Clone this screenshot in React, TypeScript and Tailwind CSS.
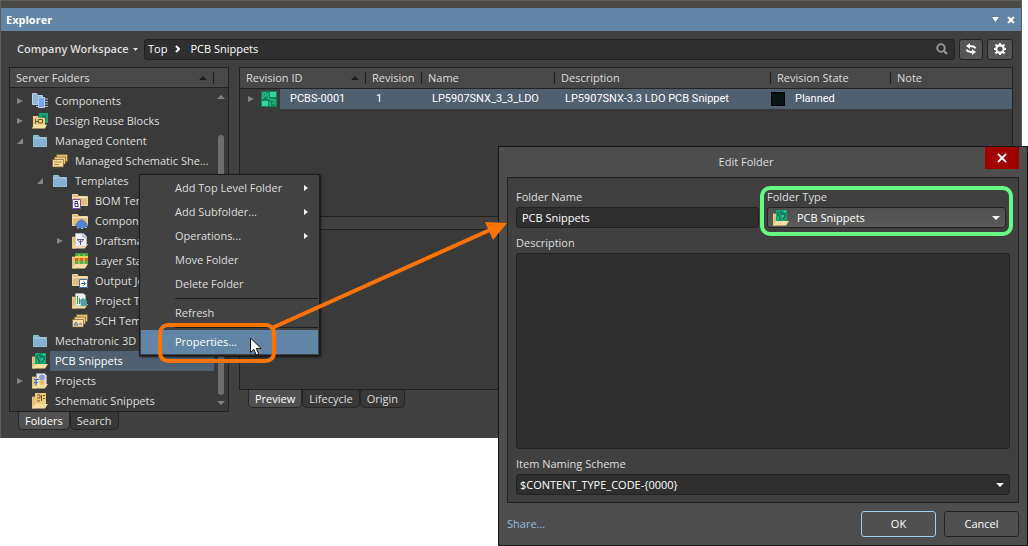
import { useState } from "react";
import type { ReactNode } from "react";

type Kind =
  | "components" | "reuse" | "folder" | "sheets" | "bom" | "component" | "draftsman"
  | "layers" | "output" | "project" | "sch" | "pcb" | "projects" | "snippet";

type Node = { label: string; icon: Kind; level: 0 | 1 | 2; open?: boolean };

const nodes: Node[] = [
  { label: "Components", icon: "components", level: 0, open: false },
  { label: "Design Reuse Blocks", icon: "reuse", level: 0, open: false },
  { label: "Managed Content", icon: "folder", level: 0, open: true },
  { label: "Managed Schematic She...", icon: "sheets", level: 1 },
  { label: "Templates", icon: "folder", level: 1, open: true },
  { label: "BOM Templates", icon: "bom", level: 2 },
  { label: "Component", icon: "component", level: 2 },
  { label: "Draftsman", icon: "draftsman", level: 2, open: false },
  { label: "Layer Stacks", icon: "layers", level: 2 },
  { label: "Output Jobs", icon: "output", level: 2 },
  { label: "Project Types", icon: "project", level: 2 },
  { label: "SCH Templates", icon: "sch", level: 2 },
  { label: "Mechatronic 3D", icon: "folder", level: 0 },
  { label: "PCB Snippets", icon: "pcb", level: 0 },
  { label: "Projects", icon: "projects", level: 0, open: false },
  { label: "Schematic Snippets", icon: "snippet", level: 0 },
];

const indent = ["pl-0", "pl-5", "pl-10"];

const Yellow = () => (
  <>
    <path d="M.5 1.500h5l1 2h9v9H.5z" fill="#e3bd7b" stroke="#f0d7a2" />
    <path d="M1 4.500h14" stroke="#f7e6c0" />
  </>
);

const OpenFolder = () => (
  <path d="M0 4h4v11H0z" fill="#e3bd7b" stroke="#f3dcaa" strokeWidth=".6" />
);

const Flap = () => <path d="M0 15.500l3-4.500h13l-3 4.500z" fill="#f7dfa0" />;

const Stack = () => (
  <>
    <path d="M4.500 1.500h11v7h-11z" fill="#e8c27a" stroke="#7d5f2a" strokeWidth=".7" />
    <path d="M2.500 4h11v7h-11z" fill="#efcd8a" stroke="#7d5f2a" strokeWidth=".7" />
    <path d="M.5 6.500h11v7.500H.5z" fill="#f7dc9f" stroke="#7d5f2a" strokeWidth=".7" />
  </>
);

const drawings: Record<Kind, ReactNode> = {
  components: (
    <>
      <path d="M.5.5h4l1 2h5v9H.5z" fill="#8fb4d0" stroke="#b9d6e8" />
      <path d="M6.500 4.500h6v10h-6z" fill="#7ba0ee" stroke="#b4ccf8" />
      <path d="M4 6h2M4 8.500h2M4 11h2M4 13.500h2M13 6h3M13 8.500h3M13 11h3M13 13.500h3" stroke="#a9b8d0" />
    </>
  ),
  reuse: (
    <>
      <path d="M7 0h9v10H7z" fill="#18a878" />
      <path d="M10 3h3v4" stroke="#0b5a44" fill="none" />
      <path d="M1 3h5l1 2h6v9H1z" fill="#efcb83" />
      <path d="M3.500 6v5M3.500 8.500h3M6.500 6.500h4v3.500h-4z" stroke="#73561f" fill="none" />
      <path d="M0 15.500l2-4h13l-2 4z" fill="#f8e0a4" />
    </>
  ),
  folder: (
    <>
      <path d="M1.500 2.500h5l1 2h7v9h-13z" fill="#86b0d0" stroke="#8cc4d4" />
      <path d="M2 5h12" stroke="#a8d4e0" />
    </>
  ),
  sheets: (
    <>
      <Stack />
      <path d="M2 9h8M2 11.500h5" stroke="#b58b3f" />
    </>
  ),
  bom: (
    <>
      <Yellow />
      <path d="M.5 6.500h8v9h-8z" fill="#fff" stroke="#7c4f9e" />
      <path d="M3 8.500h2.500v2H3v3h3v-3H3z" stroke="#5a2d82" fill="none" />
    </>
  ),
  component: (
    <>
      <Yellow />
      <path d="M3 12l3-4 4-2 5 4 1 3-4 2H6z" fill="#5583d0" />
      <path d="M5 15h2M9 15.500h2M13 14.500h2" stroke="#9ab6e8" />
    </>
  ),
  draftsman: (
    <>
      <OpenFolder />
      <Flap />
      <path d="M3.500.5h8l3 3v9.500h-11z" fill="#f2f3fa" stroke="#b9bedb" strokeWidth=".6" />
      <path d="M5 6.500h7l-3.500 3zM8.500 7v5" stroke="#6b4fa8" fill="none" />
      <path d="M11 1v3h3" stroke="#8a94c4" fill="none" />
    </>
  ),
  layers: (
    <>
      <OpenFolder />
      <Flap />
      <path d="M3 0h13v3H3z" fill="#3fa53f" />
      <path d="M3 3h13v2H3z" fill="#f2d060" />
      <path d="M3 5h13v3H3z" fill="#d0701e" />
      <path d="M3 8h13v3H3z" fill="#58b04a" />
      <path d="M7 1v10M12 1v10" stroke="#f2d060" />
    </>
  ),
  output: (
    <>
      <Yellow />
      <path d="M7.500 6.500h8v8h-8z" fill="#fff" stroke="#3f6fb0" />
      <path d="M9 10.500h4M11.500 8.500l2 2-2 2" stroke="#2b5fd0" fill="none" />
    </>
  ),
  project: (
    <>
      <OpenFolder />
      <Flap />
      <path d="M3.500.5h8l2 2V13h-10z" fill="#e9efe9" stroke="#a9b9a9" strokeWidth=".6" />
      <path d="M5.500 3v8M7.500 5v6" stroke="#3b9a4a" />
      <path d="M8 7l3-2 4 3v5H9z" fill="#4fa0a4" />
    </>
  ),
  sch: (
    <>
      <Stack />
      <path d="M2 12l2-3 2 3zM7 11h3" stroke="#4a64a8" fill="none" />
    </>
  ),
  pcb: (
    <>
      <OpenFolder />
      <path d="M3 0h11v11H3z" fill="#17a274" />
      <path d="M5 2v3l2 2v3M8 1v3h3M12 3v4l-2 2" stroke="#0b5f48" fill="none" />
      <path d="M9 6h2M5 8h1M11 1.500h2" stroke="#4fe0a8" />
      <Flap />
    </>
  ),
  projects: (
    <>
      <OpenFolder />
      <path d="M4.500.5h8l2 2v10h-10z" fill="#dfe5ee" stroke="#9aa7bb" strokeWidth=".6" />
      <circle cx="10" cy="4.500" r="3" fill="#8ea1bd" />
      <Flap />
      <path d="M2 6.500h5M2 9.500h4M4 6v7" stroke="#3b6fc0" />
      <circle cx="10" cy="9.500" r="2.500" fill="#e7bd56" />
    </>
  ),
  snippet: (
    <>
      <OpenFolder />
      <path d="M3 0h11v11H3z" fill="#efcb7c" />
      <path d="M5 2h3v3H5M9.500 2v6M11 2.500h2M11 5.500h2M5 8h3" stroke="#6f5420" fill="none" />
      <Flap />
    </>
  ),
};

const Icon = ({ kind }: { kind: Kind }) => (
  <svg viewBox="0 0 16 16" className="size-4 shrink-0" aria-hidden="true">{drawings[kind]}</svg>
);

const Twisty = ({ open }: { open?: boolean }) => (
  <svg viewBox="0 0 8 8" className="size-2" aria-hidden="true">
    {open === true && <path d="M7 1v6H1z" fill="#858585" />}
    {open === false && <path d="M1 1l6 3-6 3z" fill="#858585" />}
  </svg>
);

const Caret = ({ className }: { className: string }) => (
  <svg viewBox="0 0 8 4" preserveAspectRatio="none" className={className} aria-hidden="true">
    <path d="M0 0h8L4 4z" fill="currentColor" />
  </svg>
);

const TreeRow = ({ node, selected, onSelect }: { node: Node; selected: boolean; onSelect: () => void }) => (
  <li className={`flex h-5 items-center ${indent[node.level]}`}>
    <span className="flex w-5 shrink-0 justify-center"><Twisty open={node.open} /></span>
    <span className="flex w-5 shrink-0 justify-center"><Icon kind={node.icon} /></span>
    <button
      onClick={onSelect}
      className={`h-full min-w-0 flex-1 overflow-hidden pl-[5px] text-left whitespace-nowrap ${selected ? "bg-[#4f6070] text-white" : ""}`}
    >
      {node.label}
    </button>
  </li>
);

const Tabs = ({ items }: { items: string[] }) => {
  const [active, setActive] = useState(items[0]);
  return (
    <div role="tablist" className="flex pl-[9px]">
      {items.map((t) => (
        <button
          key={t}
          role="tab"
          aria-selected={t === active}
          onClick={() => setActive(t)}
          className={`h-[18px] rounded-b-[5px] border border-t-0 border-[#262626] px-1.5 leading-4 ${t === active ? "bg-[#505050] text-white" : "bg-[#383838]"}`}
        >
          {t}
        </button>
      ))}
    </div>
  );
};

const ServerFolders = () => {
  const [current, setCurrent] = useState("PCB Snippets");
  return (
    <section className="w-[220px] shrink-0">
      <div className="border border-[#222] bg-[#3a3a3a]">
        <header className="flex h-5 items-center border-b border-[#222] bg-[#484848] pl-1.5">
          <h2 className="flex-1">Server Folders</h2>
          <Caret className="mr-1.5 h-1 w-2 rotate-180 text-[#1d1d1d]" />
          <span className="mr-3.5 h-3 w-px bg-[#1d1d1d]" />
        </header>
        <div className="flex pt-[3px]">
          <ul className="min-w-0 flex-1">
            {nodes.map((n) => (
              <TreeRow key={n.label} node={n} selected={n.label === current} onSelect={() => setCurrent(n.label)} />
            ))}
          </ul>
          <div className="flex w-3.5 flex-col items-center pt-1 pb-1.5">
            <Caret className="h-1 w-2 rotate-180 text-[#858585]" />
            <span className="mt-9 mb-1.5 w-1.5 flex-1 rounded-full bg-[#6c6c6c]" />
            <Caret className="h-1 w-2 text-[#858585]" />
          </div>
        </div>
      </div>
      <Tabs items={["Folders", "Search"]} />
    </section>
  );
};

const headers = ["Revision ID", "Revision", "Name", "Description", "Revision State", "Note"];

const Revisions = () => (
  <div className="h-[150px] border border-[#222] bg-[#3a3a3a]">
    <table className="w-full table-fixed border-collapse">
      <colgroup>
        <col className="w-[126px]" />
        <col className="w-[56px]" />
        <col className="w-[133px]" />
        <col className="w-[216px]" />
        <col className="w-[120px]" />
        <col />
      </colgroup>
      <thead>
        <tr className="h-5 border-b border-[#222] bg-[#484848]">
          {headers.map((h, i) => (
            <th key={h} scope="col" className="p-0 text-left font-normal whitespace-nowrap">
              <div className={`flex h-3 items-center pl-1.5 ${i < 5 ? "border-r border-[#1d1d1d]" : ""}`}>
                <span className="flex-1">{h}</span>
                {i === 0 && <Caret className="mr-1.5 h-1 w-2 rotate-180 text-[#1d1d1d]" />}
              </div>
            </th>
          ))}
        </tr>
      </thead>
      <tbody>
        <tr className="h-5 bg-[#4f6070] font-[Roboto,sans-serif] whitespace-nowrap text-white">
          <td className="p-0">
            <div className="flex h-5 items-center">
              <span className="flex h-full w-10 items-center bg-[#3a3a3a] pl-[7px]">
                <Twisty open={false} />
                <svg viewBox="0 0 16 16" className="ml-1.5 size-4" aria-hidden="true">
                  <path d="M0 0h16v16H0z" fill="#0f8460" />
                  <path d="M9 1h6v5H9zM1 10h6v5H1z" fill="#35d39b" />
                  <path d="M2 8V2h3v3H3M7 2v5l3 2h4v5M9 11v4M11 12h2" stroke="#35d39b" fill="none" />
                </svg>
              </span>
              <span className="pl-2.5">PCBS-0001</span>
            </div>
          </td>
          <td className="p-0 pl-2.5">1</td>
          <td className="p-0 pl-2.5">LP5907SNX_3_3_LDO</td>
          <td className="p-0 pl-2.5">LP5907SNX-3.3 LDO PCB Snippet</td>
          <td className="p-0">
            <span className="flex items-center gap-2.5">
              <span className="size-3.5 border border-black bg-[#0d1414]" />
              Planned
            </span>
          </td>
          <td className="p-0" />
        </tr>
      </tbody>
    </table>
  </div>
);

const Toolbar = () => (
  <div className="flex h-9 items-center px-2">
    <button className="flex w-[135px] shrink-0 items-center gap-1 pl-2 font-semibold whitespace-nowrap">
      Company Workspace
      <Caret className="h-[3px] w-[5px]" />
    </button>
    <nav className="flex h-[21px] flex-1 items-center rounded-[3px] border border-[#222] bg-[#2f2f2f] pl-[3px] text-white">
      <a href="#top">Top</a>
      <svg viewBox="0 0 5 8" className="mr-2.5 ml-2 h-2 w-[5px]" aria-hidden="true">
        <path d="M1 1l3 3-3 3" stroke="currentColor" strokeWidth="2" fill="none" />
      </svg>
      <a href="#snippets" className="flex-1">PCB Snippets</a>
      <button aria-label="Search" className="mr-1.5">
        <svg viewBox="0 0 12 12" className="size-3" aria-hidden="true">
          <circle cx="5" cy="5" r="3.800" stroke="#999" strokeWidth="1.800" fill="none" />
          <path d="M8 8l3 3" stroke="#999" strokeWidth="2.200" />
        </svg>
      </button>
    </nav>
    <button aria-label="Refresh" className="ml-1 flex h-[21px] w-6 items-center justify-center rounded-[3px] border border-[#222] bg-[#555]">
      <svg viewBox="0 0 12 12" className="size-3" aria-hidden="true">
        <path d="M10.500 5.500C10 3.500 8.500 3 4 3M1.500 6.500C2 8.500 3.500 9 8 9" stroke="#fff" strokeWidth="1.800" fill="none" />
        <path d="M5 0v6L1 3zM7 6v6l4-3z" fill="#fff" />
      </svg>
    </button>
    <button aria-label="Settings" className="ml-1 flex h-[21px] w-[26px] items-center justify-center rounded-[3px] border border-[#222] bg-[#555]">
      <svg viewBox="0 0 12 12" className="size-3" aria-hidden="true">
        <circle cx="6" cy="6" r="3.700" stroke="#fff" strokeWidth="2.200" fill="none" />
        <path d="M6 0v2M6 10v2M0 6h2M10 6h2M1.500 1.500l1.500 1.500M9 9l1.500 1.500M10.500 1.500L9 3M3 9l-1.500 1.500" stroke="#fff" strokeWidth="2.200" />
      </svg>
    </button>
  </div>
);

const Explorer = () => (
  <div className="mr-1.5 border-x border-[#5c5c5c] bg-[#404040] pb-2">
    <div className="h-2 border-t border-[#5c5c5c] bg-[#4a4946]" />
    <header className="flex h-[23px] items-center bg-[#6284a5] pr-1.5 pl-[5px] text-white">
      <h1 className="flex-1 font-bold">Explorer</h1>
      <button aria-label="Panel menu" className="mr-2"><Caret className="h-[5px] w-[7px]" /></button>
      <button aria-label="Close panel">
        <svg viewBox="0 0 8 8" className="size-2" aria-hidden="true">
          <path d="M1 1l6 6M7 1L1 7" stroke="currentColor" strokeWidth="2" />
        </svg>
      </button>
    </header>
    <Toolbar />
    <div className="flex items-start gap-2.5 px-2">
      <ServerFolders />
      <section className="min-w-0 flex-1">
        <Revisions />
        <div className="mt-3 h-[161px] border border-[#222] bg-[#3a3a3a]" />
        <Tabs items={["Preview", "Lifecycle", "Origin"]} />
      </section>
    </div>
  </div>
);

const MenuItem = ({ label, sub, active }: { label: string; sub?: boolean; active?: boolean }) => (
  <button
    role="menuitem"
    className={`flex h-6 w-full items-center pr-2.5 pl-[34px] ${active ? "bg-[#6284a5] text-white" : ""}`}
  >
    <span className="flex-1 text-left">{label}</span>
    {sub && (
      <svg viewBox="0 0 4 6" className="h-1.5 w-1" aria-hidden="true"><path d="M0 0l4 3-4 3z" fill="#fff" /></svg>
    )}
  </button>
);

const ContextMenu = () => (
  <div role="menu" className="absolute top-[174px] left-[139px] w-[181px] border border-[#1c1c1c] bg-[#424242] p-px shadow-[1px_1px_2px_#111]">
    <MenuItem label="Add Top Level Folder" sub />
    <MenuItem label="Add Subfolder..." sub />
    <MenuItem label="Operations..." sub />
    <MenuItem label="Move Folder" />
    <MenuItem label="Delete Folder" />
    <hr className="my-0.5 ml-[34px] border-[#1f1f1f]" />
    <MenuItem label="Refresh" />
    <hr className="my-0.5 ml-[34px] border-[#1f1f1f]" />
    <MenuItem label="Properties..." active />
  </div>
);

const EditFolder = () => (
  <div role="dialog" aria-labelledby="dialog-title" className="absolute top-[146px] right-0 left-[498px] min-w-[480px] border border-[#151515] bg-[#4d4d4d] px-2">
    <header className="relative flex h-[30px] items-center justify-center pr-[34px]">
      <h2 id="dialog-title">Edit Folder</h2>
      <button aria-label="Close" className="absolute top-0 right-0 flex h-[22px] w-[34px] items-center justify-center bg-[#a00000] text-white">
        <svg viewBox="0 0 10 10" className="size-2.5" aria-hidden="true">
          <path d="M1 1l8 8M9 1L1 9" stroke="currentColor" strokeWidth="1.800" />
        </svg>
      </button>
    </header>
    <div className="border border-[#222] bg-[#404040] px-2 pt-2.5 pb-[7px]">
      <div className="flex gap-2 pr-1">
        <div className="flex-1">
          <label htmlFor="name" className="block h-[19px] leading-[18px]">Folder Name</label>
          <input id="name" defaultValue="PCB Snippets" className="block h-[21px] w-full rounded-[3px] border border-[#222] bg-[#2f2f2f] px-[5px] text-white outline-none" />
        </div>
        <div className="relative w-[239px]">
          <label htmlFor="type" className="block h-[19px] leading-[18px]">Folder Type</label>
          <div className="relative">
            <select id="type" className="block h-[21px] w-full appearance-none rounded-[3px] border border-[#222] bg-linear-to-b from-[#505050] to-[#5a5a5a] pl-[29px] text-white outline-none">
              <option>PCB Snippets</option>
            </select>
            <span className="pointer-events-none absolute inset-0 flex items-center justify-between px-1.5">
              <Icon kind="pcb" />
              <Caret className="h-1 w-2 text-white" />
            </span>
          </div>
          <div className="pointer-events-none absolute -inset-x-[7px] -top-0.5 -bottom-2 rounded-[10px] border-4 border-[#66fa84]" />
        </div>
      </div>
      <label htmlFor="description" className="mt-1.5 block h-[19px] leading-[18px]">Description</label>
      <textarea id="description" className="block h-[196px] w-full resize-none rounded-[3px] border border-[#222] bg-[#2f2f2f] p-1.5 text-white outline-none" />
      <label htmlFor="scheme" className="mt-1.5 block h-[19px] leading-[18px]">Item Naming Scheme</label>
      <div className="relative">
        <select id="scheme" className="block h-[21px] w-full appearance-none rounded-[3px] border border-[#222] bg-[#2f2f2f] pl-[3px] text-white outline-none">
          <option>$CONTENT_TYPE_CODE-&#123;0000&#125;</option>
        </select>
        <span className="pointer-events-none absolute inset-y-0 right-1.5 flex items-center">
          <Caret className="h-1 w-2 text-white" />
        </span>
      </div>
    </div>
    <footer className="flex items-center gap-2 py-2 text-white">
      <a href="#share" className="flex-1 text-[#8fbde3]">Share...</a>
      <button className="h-[26px] w-[75px] rounded-[3px] border border-[#a3cbea] bg-[#505050]">OK</button>
      <button className="h-[26px] w-[75px] rounded-[3px] border border-[#222] bg-[#505050]">Cancel</button>
    </footer>
  </div>
);

// Orange callout, its arrow into the dialog, and the mouse pointer
const Callout = () => (
  <>
    <div className="pointer-events-none absolute top-[323px] left-[158px] h-10 w-[118px] rounded-[10px] border-4 border-[#ff7300]" />
    <svg viewBox="0 0 250 110" className="pointer-events-none absolute top-[220px] left-[262px] h-[110px] w-[250px]" aria-hidden="true">
      <path d="M10 108L230 9" stroke="#ff7300" strokeWidth="4" />
      <path d="M245 3l-22-1 8 18z" fill="#ff7300" />
    </svg>
    <svg viewBox="0 0 12 19" className="pointer-events-none absolute top-[337px] left-[250px] h-[19px] w-3" aria-hidden="true">
      <path d="M.5 1v14.500l3.300-3.200 2.400 5.700 2.500-1-2.400-5.600h4.800z" fill="#fff" stroke="#111" />
    </svg>
  </>
);

export default function App() {
  return (
    <main className="relative min-h-screen bg-white font-['Open_Sans',sans-serif] text-[11px] leading-4 text-[#dedede]">
      <Explorer />
      <ContextMenu />
      <EditFolder />
      <Callout />
    </main>
  );
}
